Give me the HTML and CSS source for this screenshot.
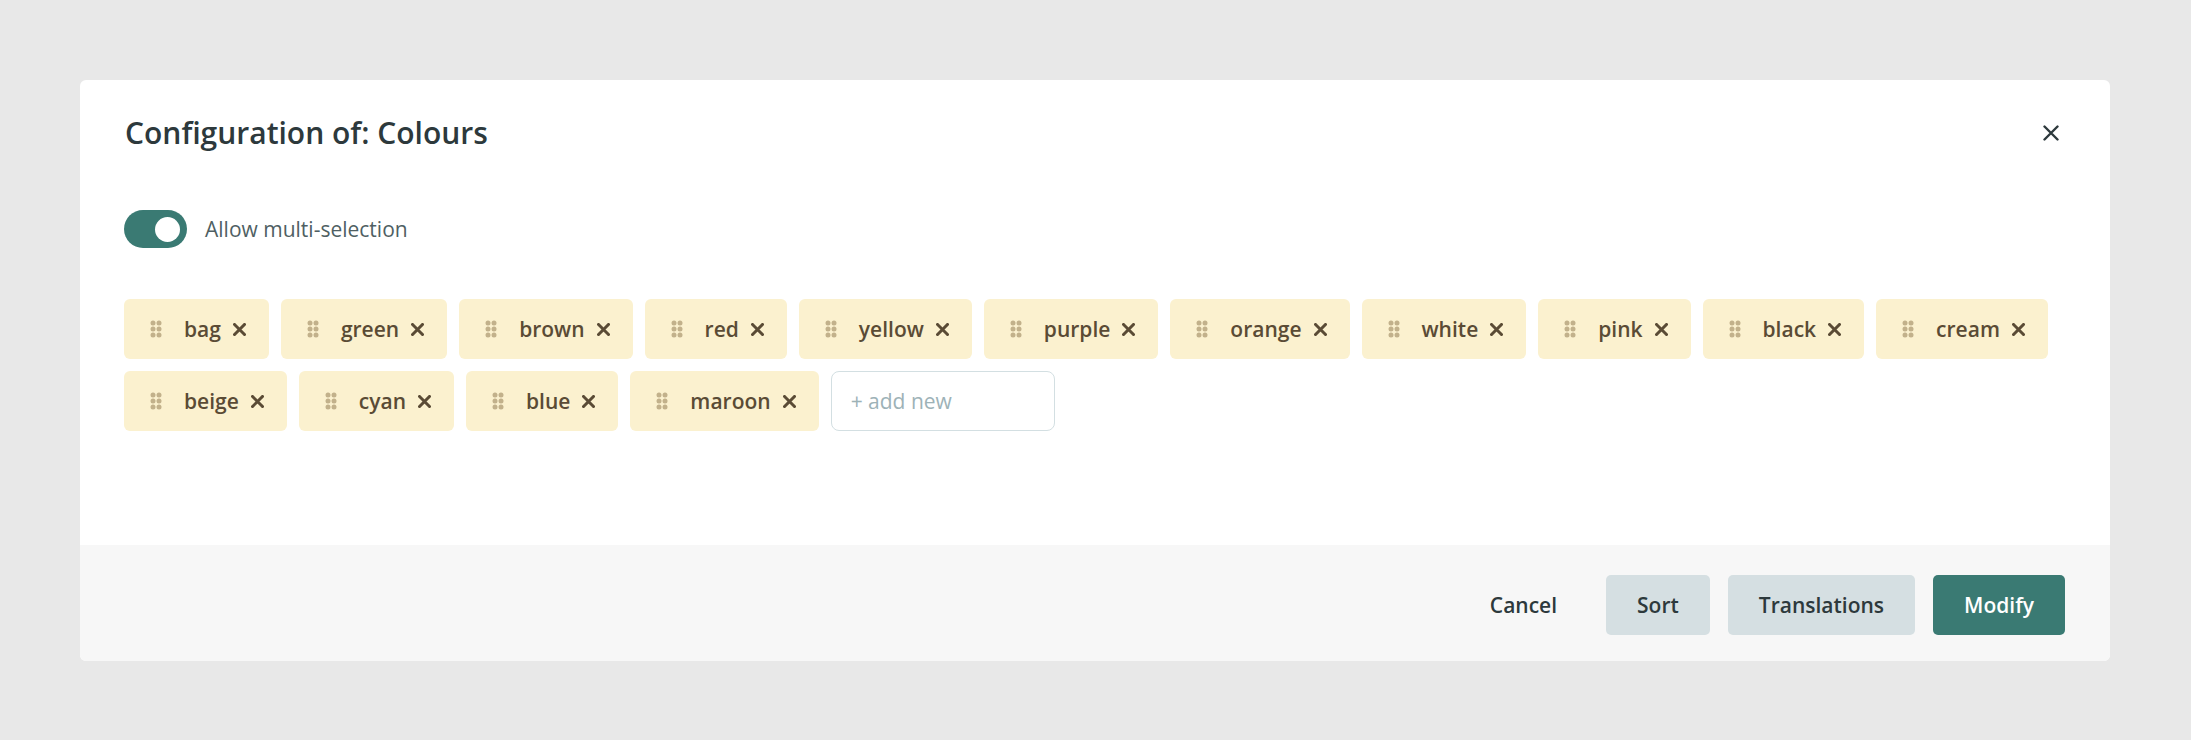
FILE: index.html
```html
<!DOCTYPE html>
<html lang="en">
<head>
  <meta charset="UTF-8" />
  <meta name="viewport" content="width=device-width, initial-scale=1.0" />
  <title>Configuration of: Colours</title>
  <link rel="stylesheet" href="styles.css">
</head>
<body>
  <div class="modal">
    <div class="modal-header">
      <h2 class="modal-title">Configuration of: Colours</h2>
      <button class="close" aria-label="Close">
        <svg width="16" height="16" viewBox="0 0 16 16"><path d="M1.5 1.5 L14.5 14.5 M14.5 1.5 L1.5 14.5" stroke="#2d393c" stroke-width="2.4" stroke-linecap="round"/></svg>
      </button>
    </div>

    <div class="modal-body">
      <label class="switch-row">
        <span class="switch on"><span class="knob"></span></span>
        <span class="switch-label">Allow multi-selection</span>
      </label>

      <div class="tags" id="tags"></div>
    </div>

    <div class="modal-footer">
      <button class="btn btn-link">Cancel</button>
      <button class="btn btn-light">Sort</button>
      <button class="btn btn-light">Translations</button>
      <button class="btn btn-primary">Modify</button>
    </div>
  </div>

  <script>
    const colours = ['bag', 'green', 'brown', 'red', 'yellow', 'purple', 'orange', 'white',
                     'pink', 'black', 'cream', 'beige', 'cyan', 'blue', 'maroon'];

    const handle = '<svg class="handle" width="12" height="18" viewBox="0 0 12 18">' +
      [3, 9].map(x => [3, 9, 15].map(y => `<circle cx="${x}" cy="${y}" r="2.5"/>`).join('')).join('') +
      '</svg>';
    const cross = '<svg class="remove" width="13" height="13" viewBox="0 0 13 13">' +
      '<path d="M1.5 1.5 L11.5 11.5 M11.5 1.5 L1.5 11.5"/></svg>';

    const box = document.getElementById('tags');
    colours.forEach(name => {
      const tag = document.createElement('div');
      tag.className = 'tag';
      tag.innerHTML = handle + `<span class="tag-name">${name}</span>` + cross;
      box.appendChild(tag);
    });

    const input = document.createElement('input');
    input.className = 'add-new';
    input.placeholder = '+ add new';
    box.appendChild(input);
  </script>
</body>
</html>
```

FILE: styles.css
```css
* { box-sizing: border-box; }
body {
  margin: 0;
  padding: 80px 81px 0 80px;
  background: #e8e8e8;
  font-family: 'Open Sans', 'Noto Sans', sans-serif;
  color: #2d393c;
}
button {
  font-family: inherit;
}
.modal {
  background: #fff;
  border-radius: 6px;
  overflow: hidden;
}
.modal-header {
  display: flex;
  align-items: center;
  justify-content: space-between;
  padding: 33px 51px 0 45px;
}
.modal-title {
  margin: 0;
  font-size: 30px;
  line-height: 40px;
  font-weight: 600;
  color: #2d393c;
}
.close {
  border: none;
  background: none;
  padding: 0;
  width: 16px;
  height: 16px;
  display: flex;
  cursor: pointer;
}
.modal-body {
  padding: 57px 45px 114px 44px;
}
.switch-row {
  display: flex;
  align-items: center;
  gap: 18px;
  margin-bottom: 51px;
}
.switch {
  width: 63px;
  height: 38px;
  border-radius: 19px;
  background: #cfd8db;
  display: flex;
  align-items: center;
  padding: 0 7px;
}
.switch.on {
  background: #3a7a73;
  justify-content: flex-end;
}
.knob {
  width: 25px;
  height: 25px;
  border-radius: 50%;
  background: #fff;
}
.switch-label {
  font-size: 21px;
  color: #4f5f63;
}
.tags {
  display: flex;
  flex-wrap: wrap;
  gap: 12px;
}
.tag {
  height: 60px;
  display: flex;
  align-items: center;
  padding: 0 23px 0 26px;
  background: #fbf1cf;
  border-radius: 6px;
  color: #5a4b35;
  font-size: 21px;
  font-weight: 600;
}
.handle {
  fill: #c2b18b;
  margin-right: 22px;
}
.tag-name {
  margin-right: 12px;
}
.remove {
  stroke: #5a4b35;
  stroke-width: 3;
  stroke-linecap: square;
}
.add-new {
  width: 224px;
  height: 60px;
  border: 1px solid #d3dfe2;
  border-radius: 8px;
  padding: 0 19px;
  font-family: inherit;
  font-size: 21px;
  color: #2d393c;
  outline: none;
}
.add-new::placeholder {
  color: #9db2b7;
}
.modal-footer {
  background: #f7f7f7;
  display: flex;
  justify-content: flex-end;
  gap: 18px;
  padding: 30px 45px 26px;
}
.btn {
  height: 60px;
  padding: 0 31px;
  border: none;
  border-radius: 5px;
  font-size: 21px;
  font-weight: 600;
  cursor: pointer;
}
.btn-link {
  background: none;
  color: #2d393c;
}
.btn-light {
  background: #d5dfe2;
  color: #2d393c;
}
.btn-primary {
  background: #3a7a73;
  color: #fff;
}
```
